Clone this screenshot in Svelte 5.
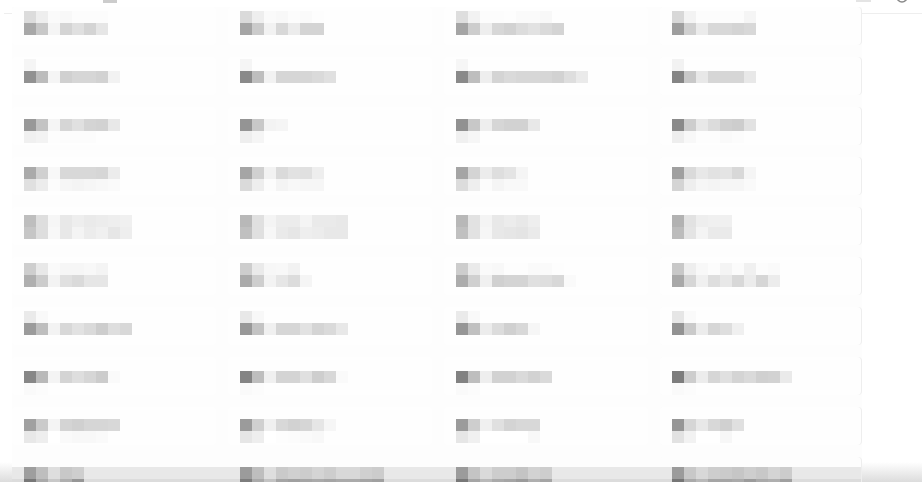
<script>
  // every card is two lines of grey blocks, left to right, one number per block
  const rows = [
    { pad: 4, cards: [
      [[220,238,250,248,252,252,252], [168,200,245,212,224,212,230]],
      [[218,238,250,248,252,250,253], [165,203,242,216,236,212,212]],
      [[222,242,252,252,253,250,250,248], [165,205,238,215,210,220,226,218,212]],
      [[216,243,252,252,252,252,245], [158,208,235,216,216,212,216]]
    ]},
    { pad: 2, cards: [
      [[245], [145,188,245,208,214,214,210,242]],
      [[245], [138,190,242,214,214,214,218,224]],
      [[246], [138,190,238,212,218,215,215,214,210,222,234]],
      [[242], [133,200,232,214,214,214,232]]
    ]},
    { pad: 12, cards: [
      [[152,195,245,214,224,212,210,232], [240,243,253,252,252,252]],
      [[148,200,243,245], [238,245]],
      [[145,200,238,214,210,210,232], [240,246]],
      [[138,205,232,220,208,205,226], [238,248,253,253,250,252]]
    ]},
    { pad: 10, cards: [
      [[170,208,248,216,216,216,214,236], [224,236,252,246,244,246,248,250]],
      [[165,208,242,218,226,224,238], [218,238,252,244,248,246,246]],
      [[165,212,236,222,228,245], [220,238,252,245,249,249]],
      [[160,218,232,226,228,216,245], [212,238,246,244,246,246,250]]
    ]},
    { pad: 8, cards: [
      [[190,222,246,232,238,234,236,238,240], [198,222,248,232,244,236,240,230,238]],
      [[184,224,244,236,236,244,234,234,232], [192,224,247,234,230,238,236,232,232]],
      [[184,226,244,232,236,232,238], [192,226,246,232,230,228,234]],
      [[178,226,238,240,240], [188,228,244,234,234]]
    ]},
    { pad: 6, cards: [
      [[206,232,250,246,246,248,244], [175,204,243,224,218,230,230]],
      [[205,234,247,248,242], [170,206,243,230,220,245]],
      [[205,234,250,248,253,253,250,250,253], [172,208,240,208,212,212,224,222,216,250]],
      [[200,238,248,252,244,251,240,252,250], [168,214,240,222,232,216,236,214,236]]
    ]},
    { pad: 4, cards: [
      [[234,249], [155,190,243,216,226,218,205,222,216]],
      [[232,248], [152,195,240,214,214,226,212,218,232]],
      [[234,249], [150,192,236,220,208,216,246]],
      [[230,250], [146,202,236,214,222,240]]
    ]},
    { pad: 14, cards: [
      [[135,185,244,212,222,214,204,250], [250,252]],
      [[132,190,240,212,212,224,206,216,250], [250,252]],
      [[130,190,238,210,210,218,210,218], [250,252]],
      [[125,205,236,214,224,212,218,208,210,234], [250,252]]
    ]},
    { pad: 12, cards: [
      [[160,202,244,212,208,214,214,216], [232,238,255,250,248,248,250]],
      [[155,208,240,216,210,214,230,246], [230,238,255,253,252,250,248]],
      [[155,206,240,224,212,216,216], [230,240,255,255,255,255,248]],
      [[150,214,232,216,208,224], [226,242,255,255,247]]
    ]},
    { pad: 10, shade: true, cards: [
      [[158,190,222,200,206], [120,170,200,175,150]],
      [[155,190,222,202,208,204,212,205,216,216,208,204], [125,170,195,165,160,165,170,165,170,170,165,160]],
      [[155,196,218,205,205,196,210,205], [120,165,185,170,165,155,175,165]],
      [[155,200,216,205,203,198,206,200,212,204], [118,170,185,165,165,170,155,170,175,160]]
    ]}
  ];
</script>

<div class="page">
  <header class="topbar">
    <span class="crumb"></span>
    <span class="tool"></span>
    <svg class="avatar" viewBox="0 0 12 12" width="12" height="12" aria-hidden="true">
      <circle cx="6" cy="6" r="5" fill="none" stroke="#8a8a8a" stroke-width="1.6" />
    </svg>
  </header>

  <main class="list">
    {#each rows as row}
      <div class="row" class:shade={row.shade}>
        {#each row.cards as card}
          <div class="card" style="padding-top: {row.pad}px">
            {#each card as line}
              <div class="line">
                {#each line as v}
                  <span class="block" style="background: rgb({v},{v},{v})"></span>
                {/each}
              </div>
            {/each}
          </div>
        {/each}
      </div>
    {/each}
  </main>

  <div class="bottom-shadow"></div>
</div>

<style>
  :global(body) {
    margin: 0;
    background: #fff;
  }

  .page {
    position: relative;
    height: 482px;
    overflow: hidden;
    background: #fff;
  }

  .topbar {
    display: flex;
    height: 13px;
    margin-left: 4px;
    padding-right: 14px;
    border-bottom: 1px solid #eee;
  }

  .crumb {
    width: 14px;
    height: 3px;
    margin-left: 99px;
    background: #ccc;
  }

  .tool {
    width: 15px;
    height: 2px;
    margin-left: auto;
    background: #e4e4e4;
  }

  .avatar {
    margin-top: -9px;
    margin-left: 25px;
  }

  .list {
    position: relative;
    z-index: 1;
    display: flex;
    flex-direction: column;
    gap: 12px;
    width: 850px;
    margin: -7px 0 0 12px;
    background: #fdfdfd;
  }

  .row {
    display: grid;
    grid-template-columns: repeat(3, 204px) 202px;
    gap: 12px;
    height: 38px;
  }

  .row.shade {
    height: 40px;
    background: linear-gradient(#fdfdfd 10px, #e8e8e8 10px, #e8e8e8 22px, #dcdcdc 22px);
  }

  .card {
    box-sizing: border-box;
    padding-left: 12px;
    border-radius: 4px;
    background: #fefefe;
  }

  .card:last-child {
    box-shadow: inset -1px 0 0 #eee;
  }

  .shade .card {
    background: none;
  }

  .line {
    display: flex;
    height: 12px;
  }

  .block {
    width: 12px;
    height: 12px;
  }

  .bottom-shadow {
    position: absolute;
    left: 0;
    right: 0;
    bottom: 0;
    height: 20px;
    background: linear-gradient(rgba(220, 220, 220, 0), #dcdcdc);
  }
</style>
